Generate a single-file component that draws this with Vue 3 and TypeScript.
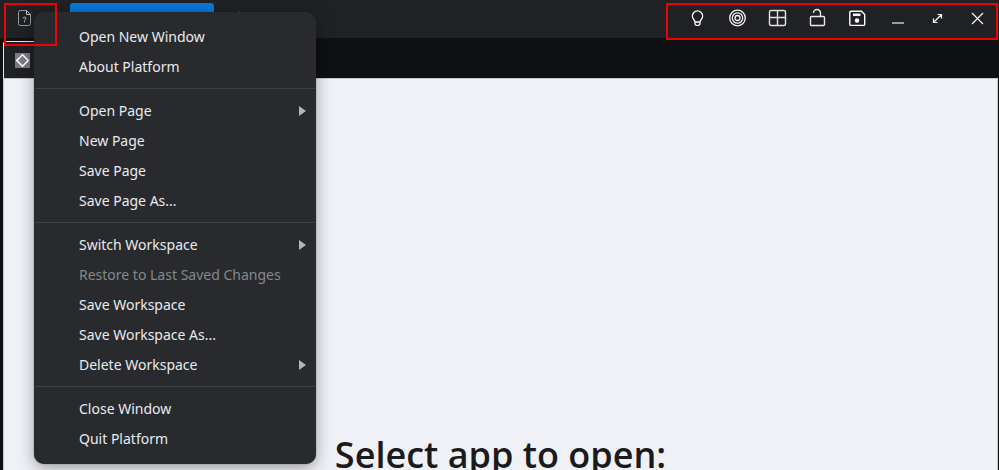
<script setup lang="ts">
interface MenuItem {
  label: string
  submenu?: boolean
  disabled?: boolean
}

const menuGroups: MenuItem[][] = [
  [{ label: 'Open New Window' }, { label: 'About Platform' }],
  [
    { label: 'Open Page', submenu: true },
    { label: 'New Page' },
    { label: 'Save Page' },
    { label: 'Save Page As...' },
  ],
  [
    { label: 'Switch Workspace', submenu: true },
    { label: 'Restore to Last Saved Changes', disabled: true },
    { label: 'Save Workspace' },
    { label: 'Save Workspace As...' },
    { label: 'Delete Workspace', submenu: true },
  ],
  [{ label: 'Close Window' }, { label: 'Quit Platform' }],
]
</script>

<template>
  <div class="window">
    <header class="titlebar">
      <button class="app-button" type="button">
        <svg width="16" height="18" viewBox="0 0 16 18" fill="none" stroke="#9a9b9e">
          <path d="M9.5 1.5H3.5a2 2 0 0 0-2 2v11a2 2 0 0 0 2 2h8a2 2 0 0 0 2-2V5.500z" />
          <path d="M9.500 1.500v4h4" stroke="#c4c5c7" />
          <path d="M6.200 9.300c0-1.600 2.700-1.600 2.700 0 0 1-1.400 1-1.400 2.200M7.500 12.300v1" stroke="#d0d0d2" />
        </svg>
      </button>
      <button class="page-tab" type="button"></button>
      <button class="add-page" type="button">
        <svg width="12" height="12" viewBox="0 0 12 12" stroke="#55575a"><path d="M6 0v12M0 6h12" /></svg>
      </button>
      <nav class="controls">
        <button type="button">
          <svg width="20" height="20" viewBox="0 0 20 20" fill="none" stroke="#fff" stroke-width="1.300">
            <path d="M7 14c0-2-2.700-2.800-2.700-5.900a5.200 5.200 0 0 1 10.400 0c0 3.100-2.700 3.900-2.700 5.900z" />
            <path d="M7 14.500v1.300c0 1 .7 1.500 1.500 1.500h2c.8 0 1.500-.5 1.500-1.500v-1.300" />
          </svg>
        </button>
        <button type="button">
          <svg width="20" height="20" viewBox="0 0 20 20" fill="none" stroke="#f2f2f2" stroke-width="1.300">
            <circle cx="9.500" cy="10" r="7.800" /><circle cx="9.500" cy="10" r="5.200" /><circle cx="9.500" cy="10" r="2.500" />
          </svg>
        </button>
        <button type="button">
          <svg width="20" height="20" viewBox="0 0 20 20" fill="none" stroke="#e4e4e5" stroke-width="1.400">
            <rect x="1.500" y="2.500" width="16" height="15" rx="1.500" /><path d="M9.500 2.500v15M1.500 9.500h16" />
          </svg>
        </button>
        <button type="button">
          <svg width="20" height="20" viewBox="0 0 20 20" fill="none" stroke="#e8e8e9" stroke-width="1.400">
            <rect x="2.500" y="8.500" width="14" height="9" rx="1" /><path d="M12.500 8.500V5a3.500 3.500 0 0 0-7 0" />
          </svg>
        </button>
        <button type="button">
          <svg width="20" height="20" viewBox="0 0 20 20" fill="none" stroke="#fff" stroke-width="1.400">
            <path d="M3 3.300h10.500l3.200 3.200v9.700a1.200 1.200 0 0 1-1.200 1.200H3a1.200 1.200 0 0 1-1.200-1.200V4.500A1.200 1.200 0 0 1 3 3.300z" />
            <path d="M5 6.800h7.500" stroke-width="2.500" /><circle cx="9" cy="12.500" r="2.300" fill="#fff" stroke="none" />
          </svg>
        </button>
        <button type="button">
          <svg width="20" height="20" viewBox="0 0 20 20"><path d="M4 14h12v2H4z" fill="#9b9c9d" /></svg>
        </button>
        <button type="button">
          <svg width="20" height="20" viewBox="0 0 20 20" fill="none" stroke="#fff" stroke-width="1.200">
            <path d="M5.500 14.500l8-8M9.500 6.500h4v4M5.500 10.500v4h4" />
          </svg>
        </button>
        <button type="button">
          <svg width="20" height="20" viewBox="0 0 20 20" fill="none" stroke="#fff" stroke-width="1.100">
            <path d="M4 5l11 11M15 5L4 16" />
          </svg>
        </button>
      </nav>
    </header>

    <div class="tabstrip">
      <button class="view-tab" type="button">
        <svg width="15" height="15" viewBox="0 0 15 15">
          <path d="M0 0h15v15H0z" fill="#7b7a87" />
          <path d="M7.500 1.800l5.700 5.700-5.700 5.700-5.700-5.700z" fill="#7b7a87" stroke="#fff" stroke-width="1.600" />
        </svg>
      </button>
    </div>

    <main class="content">
      <h1>Select app to open:</h1>
    </main>

    <div class="menu" role="menu">
      <div v-for="(group, g) in menuGroups" :key="g" class="group" role="group">
        <button
          v-for="item in group"
          :key="item.label"
          class="item"
          type="button"
          role="menuitem"
          :disabled="item.disabled"
        >
          <span>{{ item.label }}</span>
          <svg v-if="item.submenu" width="7" height="10" viewBox="0 0 7 10"><path d="M0 0l7 5-7 5z" fill="#b4b5b7" /></svg>
        </button>
      </div>
    </div>

    <div class="highlight highlight-app"></div>
    <div class="highlight highlight-controls"></div>
  </div>
</template>

<style>
body {
  background: #0f1012;
}
</style>

<style scoped>
.window {
  position: relative;
  display: flex;
  flex-direction: column;
  height: 100vh;
  overflow: hidden;
  font-family: 'Noto Sans', 'Open Sans', sans-serif;
}
button {
  margin: 0;
  padding: 0;
  border: 0;
  background: none;
  font: inherit;
  color: inherit;
}
svg {
  display: block;
  flex: none;
}
.titlebar {
  display: flex;
  flex: none;
  height: 38px;
  padding-right: 1px;
  background: #202124;
}
.app-button {
  display: flex;
  align-items: center;
  justify-content: center;
  width: 50px;
  height: 36px;
}
.page-tab {
  width: 144px;
  margin: 3px 0 0 20px;
  border-radius: 3px 3px 0 0;
  background: #0a76d8;
}
.add-page {
  display: flex;
  padding: 11px 0 0 19px;
}
.controls {
  display: flex;
  margin-left: auto;
}
.controls button {
  display: flex;
  align-items: center;
  justify-content: center;
  width: 40px;
  height: 36px;
}
.tabstrip {
  display: flex;
  flex: none;
  height: 40px;
  padding: 3px 3px 0;
  box-sizing: border-box;
}
.view-tab {
  width: 180px;
  padding-left: 11px;
  border-top: 1px solid #e6e7ea;
  border-left: 1px solid #e6e7ea;
  border-radius: 3px 3px 0 0;
  background: #202124;
}
.content {
  flex: 1;
  margin: 0 1px 0 3px;
  padding-top: 350px;
  border: 1px solid #c6c7cb;
  border-width: 1px 1px 0;
  background: #f0f1f6;
  text-align: center;
}
h1 {
  margin: 0;
  font-family: 'Open Sans', 'Noto Sans', sans-serif;
  font-size: 36px;
  line-height: 52px;
  font-weight: 600;
  color: #1b1b1d;
}
.menu {
  position: absolute;
  top: 12px;
  left: 34px;
  width: 282px;
  padding: 10px 1px;
  box-sizing: border-box;
  border-radius: 10px;
  background: #292a2d;
  box-shadow: 0 0 1px rgba(40, 41, 44, 0.8), 0 4px 16px rgba(0, 0, 0, 0.35);
  color: #e8eaed;
  font-size: 14px;
}
.group + .group {
  margin-top: 6px;
  padding-top: 7px;
  border-top: 1px solid #3f4043;
}
.item {
  display: flex;
  align-items: center;
  justify-content: space-between;
  width: 100%;
  height: 30px;
  padding: 0 9px 0 44px;
  line-height: 20px;
  text-align: left;
}
.item:disabled {
  color: #85888c;
}
.highlight {
  position: absolute;
  box-sizing: border-box;
  border: 2px solid #f00000;
  pointer-events: none;
}
.highlight-app {
  top: 3px;
  left: 4px;
  width: 53px;
  height: 43px;
}
.highlight-controls {
  top: 3px;
  right: 1px;
  width: 332px;
  height: 37px;
}
</style>
